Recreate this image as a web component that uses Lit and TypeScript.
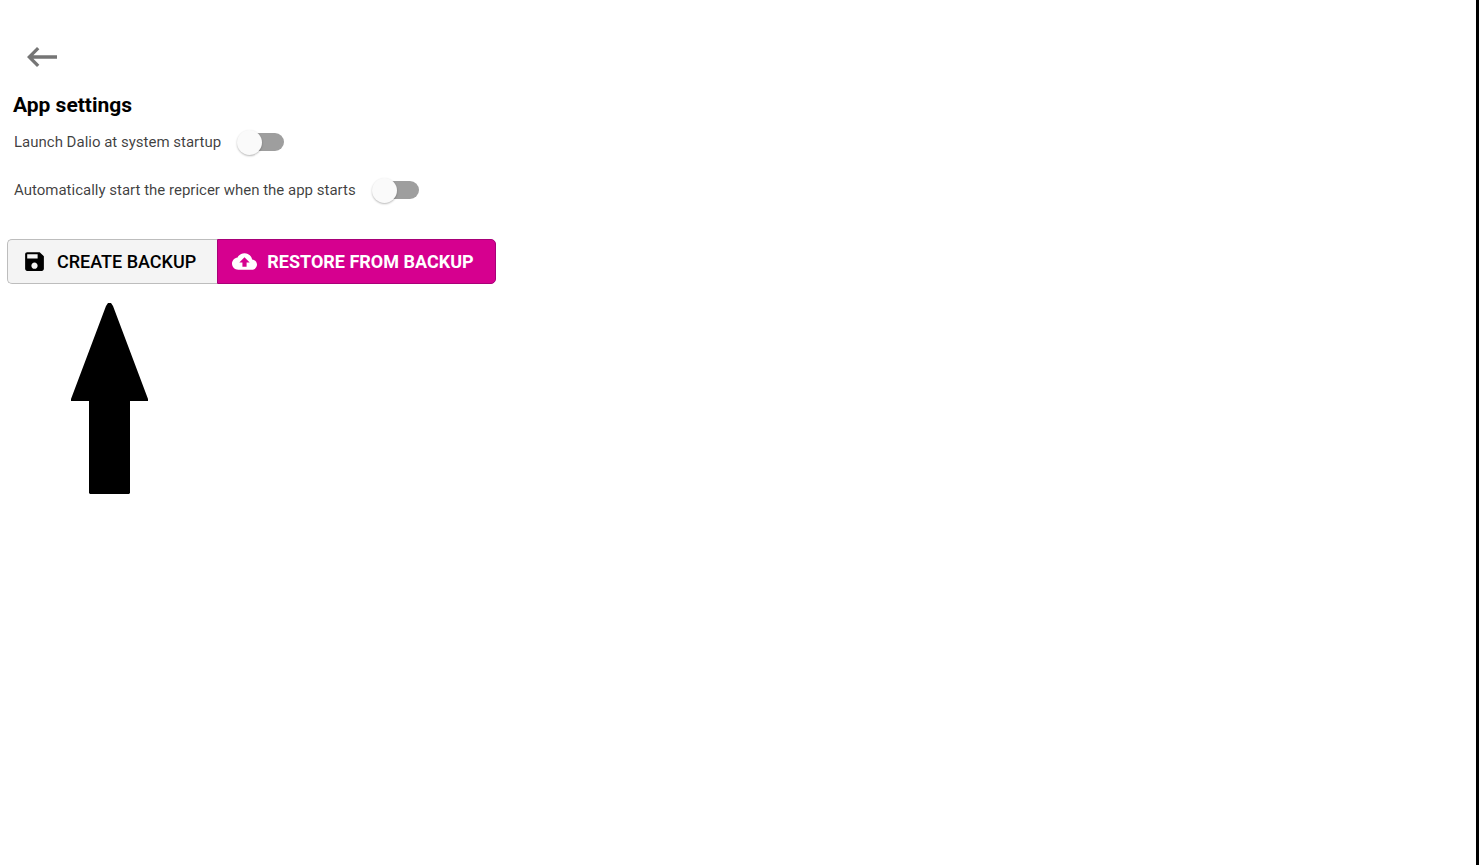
import { LitElement, html, css, svg } from "lit";
import { customElement, property } from "lit/decorators.js";

const saveIcon = svg`<path d="M17 3H5c-1.11 0-2 .9-2 2v14c0 1.1.89 2 2 2h14c1.1 0 2-.9 2-2V7l-4-4zm-5 16c-1.66 0-3-1.34-3-3s1.34-3 3-3 3 1.34 3 3-1.34 3-3 3zm3-10H5V5h10v4z"/>`;
const cloudUploadIcon = svg`<path d="M19.35 10.04C18.67 6.59 15.64 4 12 4 9.11 4 6.6 5.64 5.35 8.04 2.34 8.36 0 10.91 0 14c0 3.31 2.69 6 6 6h13c2.76 0 5-2.24 5-5 0-2.64-2.05-4.78-4.65-4.96zM14 13v4h-4v-4H7l5-5 5 5h-3z"/>`;
const backIcon = svg`<path d="M21 11H6.83l3.58-3.59L9 6l-6 6 6 6 1.41-1.41L6.83 13H21z"/>`;

@customElement("setting-switch")
export class SettingSwitch extends LitElement {
  @property() label = "";

  static styles = css`
    :host {
      display: block;
    }
    .row {
      display: inline-flex;
      align-items: center;
      gap: 22px;
      height: 48px;
      font-size: 15px;
      color: rgba(0, 0, 0, 0.76);
      cursor: pointer;
    }
    .switch {
      appearance: none;
      display: flex;
      align-items: center;
      width: 41px;
      height: 18px;
      margin: 0;
      border-radius: 9px;
      background: #9e9e9e;
      cursor: pointer;
    }
    .switch::before {
      content: "";
      flex: none;
      width: 25px;
      height: 25px;
      margin-left: -6px;
      border-radius: 50%;
      background: #fafafa;
      box-shadow: 0 1px 2px rgba(0, 0, 0, 0.28);
    }
    .switch:checked {
      background: #ea80c6;
    }
    .switch:checked::before {
      margin-left: 22px;
      background: #d6008f;
    }
  `;

  render() {
    return html`<label class="row">
      <span>${this.label}</span>
      <input class="switch" type="checkbox" role="switch" />
    </label>`;
  }
}

@customElement("app-root")
export class AppRoot extends LitElement {
  static styles = css`
    :host {
      display: block;
      box-sizing: border-box;
      min-height: 100vh;
      padding: 37px 7px 0;
      border-right: 3px solid #000;
      background: #fff;
      color: #000;
      font-family: Roboto, "Liberation Sans", sans-serif;
    }
    .back {
      display: flex;
      width: 40px;
      height: 40px;
      margin-left: 15px;
      padding: 0;
      border: 0;
      background: none;
      color: #757575;
      cursor: pointer;
    }
    .back svg {
      width: 40px;
      height: 40px;
    }
    svg {
      display: block;
      fill: currentColor;
    }
    .title {
      margin: 15px 6px 0;
      font-size: 21px;
      line-height: 26px;
      font-weight: 700;
    }
    .settings {
      padding: 0 7px;
    }
    .actions {
      display: flex;
      margin-top: 25px;
    }
    .action {
      display: flex;
      align-items: center;
      gap: 10px;
      height: 45px;
      padding: 0 21px 0 14px;
      border: 1px solid #bdbdbd;
      border-right: 0;
      border-radius: 5px 0 0 5px;
      background: #f4f4f4;
      color: #000;
      font-family: inherit;
      font-size: 18px;
      line-height: 21px;
      font-weight: 500;
      text-transform: uppercase;
      white-space: nowrap;
      cursor: pointer;
    }
    .action svg {
      width: 25px;
      height: 25px;
    }
    .action.primary {
      border: 1px solid #a80078;
      border-radius: 0 5px 5px 0;
      background: #d6008f;
      color: #fff;
      font-weight: 700;
    }
    .pointer {
      width: 77px;
      height: 191px;
      margin: 19px 0 0 64px;
    }
  `;

  render() {
    return html`
      <button class="back" aria-label="Back">
        <svg viewBox="0 0 24 24" aria-hidden="true">${backIcon}</svg>
      </button>
      <h1 class="title">App settings</h1>
      <div class="settings">
        <setting-switch label="Launch Dalio at system startup"></setting-switch>
        <setting-switch label="Automatically start the repricer when the app starts"></setting-switch>
      </div>
      <div class="actions">
        <button class="action">
          <svg viewBox="0 0 24 24" aria-hidden="true">${saveIcon}</svg>
          <span>Create backup</span>
        </button>
        <button class="action primary">
          <svg viewBox="0 0 24 24" aria-hidden="true">${cloudUploadIcon}</svg>
          <span>Restore from backup</span>
        </button>
      </div>
      <svg class="pointer" viewBox="0 0 77 191" aria-hidden="true">
        <path d="M37 0h3l2 3 35 93v2H59v92l-1 1H19l-1-1V98H0v-2L35 3z" />
      </svg>
    `;
  }
}
